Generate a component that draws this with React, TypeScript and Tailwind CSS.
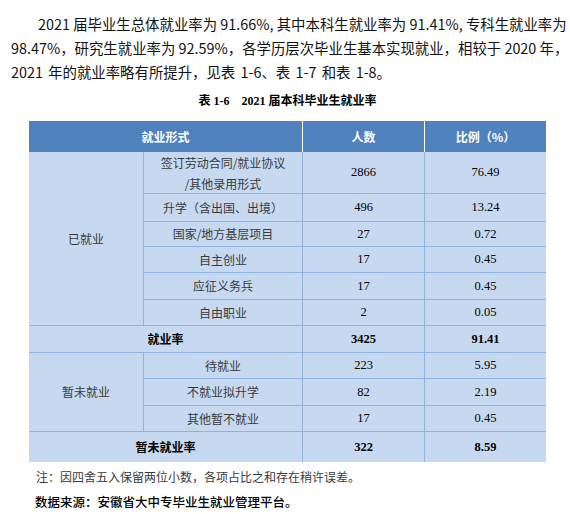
import React from "react";

const sans = '"Noto Sans CJK SC", "Noto Sans", sans-serif';
const serifNum = '"Liberation Serif", "Noto Sans CJK SC", serif';

const cjk = "text-[12px] text-[#3a3a3a]";
const num = "text-[12.5px] text-black";
const cell = "flex items-center justify-center text-center";
const line = "border-[#8db3e2]";

export default function App() {
  return (
    <div className="w-[570px] h-[514px] bg-white overflow-hidden" style={{ fontFamily: sans }}>
      <div className="pl-[11px] pt-[12px] text-[14.4px] leading-[24px] text-[#111] whitespace-nowrap">
        <div className="pl-[27px]">2021 届毕业生总体就业率为 91.66%, 其中本科生就业率为 91.41%, 专科生就业率为</div>
        <div>98.47%，研究生就业率为 92.59%，各学历层次毕业生基本实现就业，相较于 2020 年，</div>
        <div className="[word-spacing:2px]">2021 年的就业率略有所提升，见表 1-6、表 1-7 和表 1-8。</div>
      </div>

      <div
        className="ml-[29px] w-[517px] mt-[9px] text-center text-[12px] leading-[16px] font-bold text-black whitespace-pre"
        style={{ fontFamily: serifNum }}
      >
        {"表 1-6    2021 届本科毕业生就业率"}
      </div>

      <div
        className="ml-[29px] mt-[12px] w-[517px] grid grid-cols-[114px_159px_122px_122px] grid-rows-[31px_41px_28px_25px_26px_27px_26px_27px_26px_27px_26px_31px] bg-[#c6d9f1]"
      >
        {/* header */}
        <div className={`${cell} col-start-1 col-span-2 row-start-1 bg-[#4f81bd] text-white font-bold text-[12px]`}>就业形式</div>
        <div className={`${cell} col-start-3 row-start-1 bg-[#4f81bd] text-white font-bold text-[12px] border-l border-white`}>人数</div>
        <div className={`${cell} col-start-4 row-start-1 bg-[#4f81bd] text-white font-bold text-[12px] border-l border-white`}>比例（%）</div>

        {/* 已就业 group */}
        <div className={`${cell} col-start-1 row-start-2 row-span-6 ${cjk}`}>已就业</div>

        <div className={`${cell} col-start-2 row-start-2 border-l ${line} ${cjk} leading-[21px]`}>
          签订劳动合同/就业协议
          <br />
          /其他录用形式
        </div>
        <div className={`${cell} col-start-3 row-start-2 border-l ${line} ${num}`} style={{ fontFamily: serifNum }}>2866</div>
        <div className={`${cell} col-start-4 row-start-2 border-l ${line} ${num}`} style={{ fontFamily: serifNum }}>76.49</div>

        {[
          ["升学（含出国、出境）", "496", "13.24", "row-start-3"],
          ["国家/地方基层项目", "27", "0.72", "row-start-4"],
          ["自主创业", "17", "0.45", "row-start-5"],
          ["应征义务兵", "17", "0.45", "row-start-6"],
          ["自由职业", "2", "0.05", "row-start-7"],
        ].map(([a, b, c, r]) => (
          <React.Fragment key={a}>
            <div className={`${cell} col-start-2 ${r} border-l border-t ${line} ${cjk}`}>{a}</div>
            <div className={`${cell} col-start-3 ${r} border-l border-t ${line} ${num}`} style={{ fontFamily: serifNum }}>{b}</div>
            <div className={`${cell} col-start-4 ${r} border-l border-t ${line} ${num}`} style={{ fontFamily: serifNum }}>{c}</div>
          </React.Fragment>
        ))}

        {/* 就业率 */}
        <div className={`${cell} col-start-1 col-span-2 row-start-8 border-t ${line} text-[12px] font-bold text-black`}>就业率</div>
        <div className={`${cell} col-start-3 row-start-8 border-l border-t ${line} ${num} font-bold`} style={{ fontFamily: serifNum }}>3425</div>
        <div className={`${cell} col-start-4 row-start-8 border-l border-t ${line} ${num} font-bold`} style={{ fontFamily: serifNum }}>91.41</div>

        {/* 暂未就业 group */}
        <div className={`${cell} col-start-1 row-start-9 row-span-3 border-t ${line} ${cjk}`}>暂未就业</div>
        {[
          ["待就业", "223", "5.95", "row-start-9"],
          ["不就业拟升学", "82", "2.19", "row-start-10"],
          ["其他暂不就业", "17", "0.45", "row-start-11"],
        ].map(([a, b, c, r]) => (
          <React.Fragment key={a}>
            <div className={`${cell} col-start-2 ${r} border-l border-t ${line} ${cjk}`}>{a}</div>
            <div className={`${cell} col-start-3 ${r} border-l border-t ${line} ${num}`} style={{ fontFamily: serifNum }}>{b}</div>
            <div className={`${cell} col-start-4 ${r} border-l border-t ${line} ${num}`} style={{ fontFamily: serifNum }}>{c}</div>
          </React.Fragment>
        ))}

        {/* 暂未就业率 */}
        <div className={`${cell} col-start-1 col-span-2 row-start-12 border-t ${line} text-[12px] font-bold text-black`}>暂未就业率</div>
        <div className={`${cell} col-start-3 row-start-12 border-l border-t ${line} ${num} font-bold`} style={{ fontFamily: serifNum }}>322</div>
        <div className={`${cell} col-start-4 row-start-12 border-l border-t ${line} ${num} font-bold`} style={{ fontFamily: serifNum }}>8.59</div>
      </div>

      <div className="pl-[36px] mt-[5px] text-[12px] leading-[20px] text-[#3a3a3a] whitespace-nowrap">
        注：因四舍五入保留两位小数，各项占比之和存在稍许误差。
      </div>
      <div className="pl-[35px] mt-[5px] text-[12.5px] leading-[20px] text-black font-medium whitespace-nowrap">
        数据来源：安徽省大中专毕业生就业管理平台。
      </div>
    </div>
  );
}
